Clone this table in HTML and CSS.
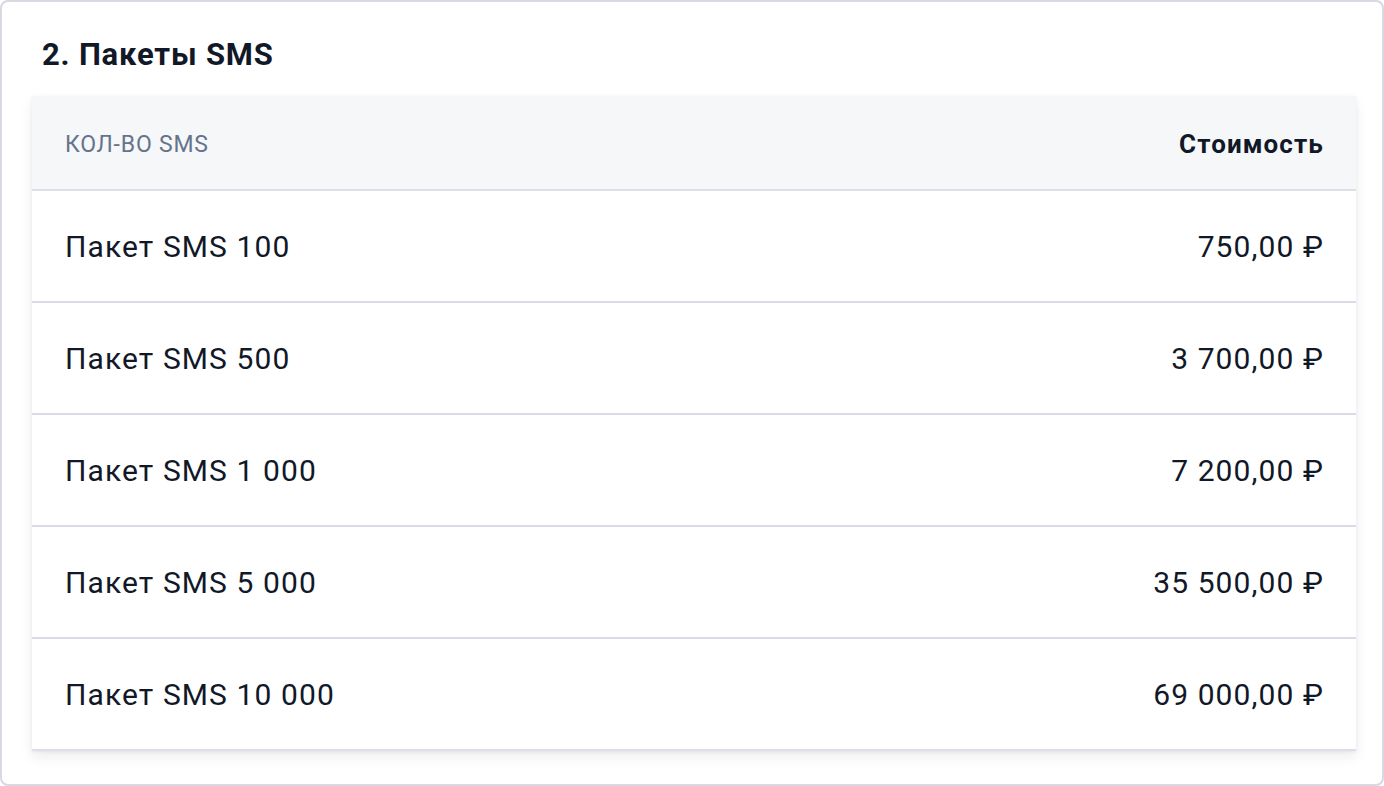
FILE: index.html
```html
<!DOCTYPE html>
<html lang="ru">
<head>
<meta charset="utf-8">
<title>Пакеты SMS</title>
<link rel="stylesheet" href="styles.css">
</head>
<body>
<section class="card">
  <h2 class="title">2. Пакеты SMS</h2>
  <div class="table-wrap">
    <table class="table">
      <thead>
        <tr>
          <th class="th-name">Кол-во SMS</th>
          <th class="th-price">Стоимость</th>
        </tr>
      </thead>
      <tbody>
        <tr><td>Пакет SMS 100</td><td class="price">750,00 ₽</td></tr>
        <tr><td>Пакет SMS 500</td><td class="price">3 700,00 ₽</td></tr>
        <tr><td>Пакет SMS 1 000</td><td class="price">7 200,00 ₽</td></tr>
        <tr><td>Пакет SMS 5 000</td><td class="price">35 500,00 ₽</td></tr>
        <tr><td>Пакет SMS 10 000</td><td class="price">69 000,00 ₽</td></tr>
      </tbody>
    </table>
  </div>
</section>
</body>
</html>
```

FILE: styles.css
```css
* { box-sizing: border-box; }
html, body { margin: 0; padding: 0; background: #ffffff; }
body {
  font-family: Roboto, "Noto Sans", "Liberation Sans", sans-serif;
  color: #111827;
  width: 1384px;
  height: 786px;
}
.card {
  width: 1384px;
  height: 786px;
  border: 2px solid #d6d8e2;
  border-radius: 8px;
  padding: 30px 26px 0 30px;
}
.title {
  margin: 0 0 0 10px;
  font-size: 31px;
  line-height: 46px;
  font-weight: 700;
  letter-spacing: 0.8px;
  color: #111827;
}
.table-wrap {
  margin-top: 18px;
  box-shadow: 0 6px 12px rgba(17, 24, 39, 0.08), 0 1px 3px rgba(17, 24, 39, 0.06);
}
.table {
  width: 100%;
  border-collapse: collapse;
}
.table thead tr {
  background: #f6f7f9;
}
.table th {
  height: 94px;
  padding: 3px 33px 0;
  border-bottom: 2px solid #dcdfe7;
  text-align: left;
}
.th-name {
  font-size: 23px;
  font-weight: 400;
  letter-spacing: 0.8px;
  text-transform: uppercase;
  color: #64748b;
}
.th-price {
  text-align: right !important;
  font-size: 26px;
  font-weight: 700;
  letter-spacing: 1.1px;
  padding-right: 32px !important;
  color: #111827;
}
.table td {
  height: 112px;
  padding: 1px 33px 0;
  font-size: 30px;
  letter-spacing: 1.1px;
  color: #111827;
  border-bottom: 2px solid #d9dce6;
}
.table tbody tr:last-child td { border-bottom: 2px solid #dcdfe7; }
.table td.price { text-align: right; padding-right: 32px; }
```
